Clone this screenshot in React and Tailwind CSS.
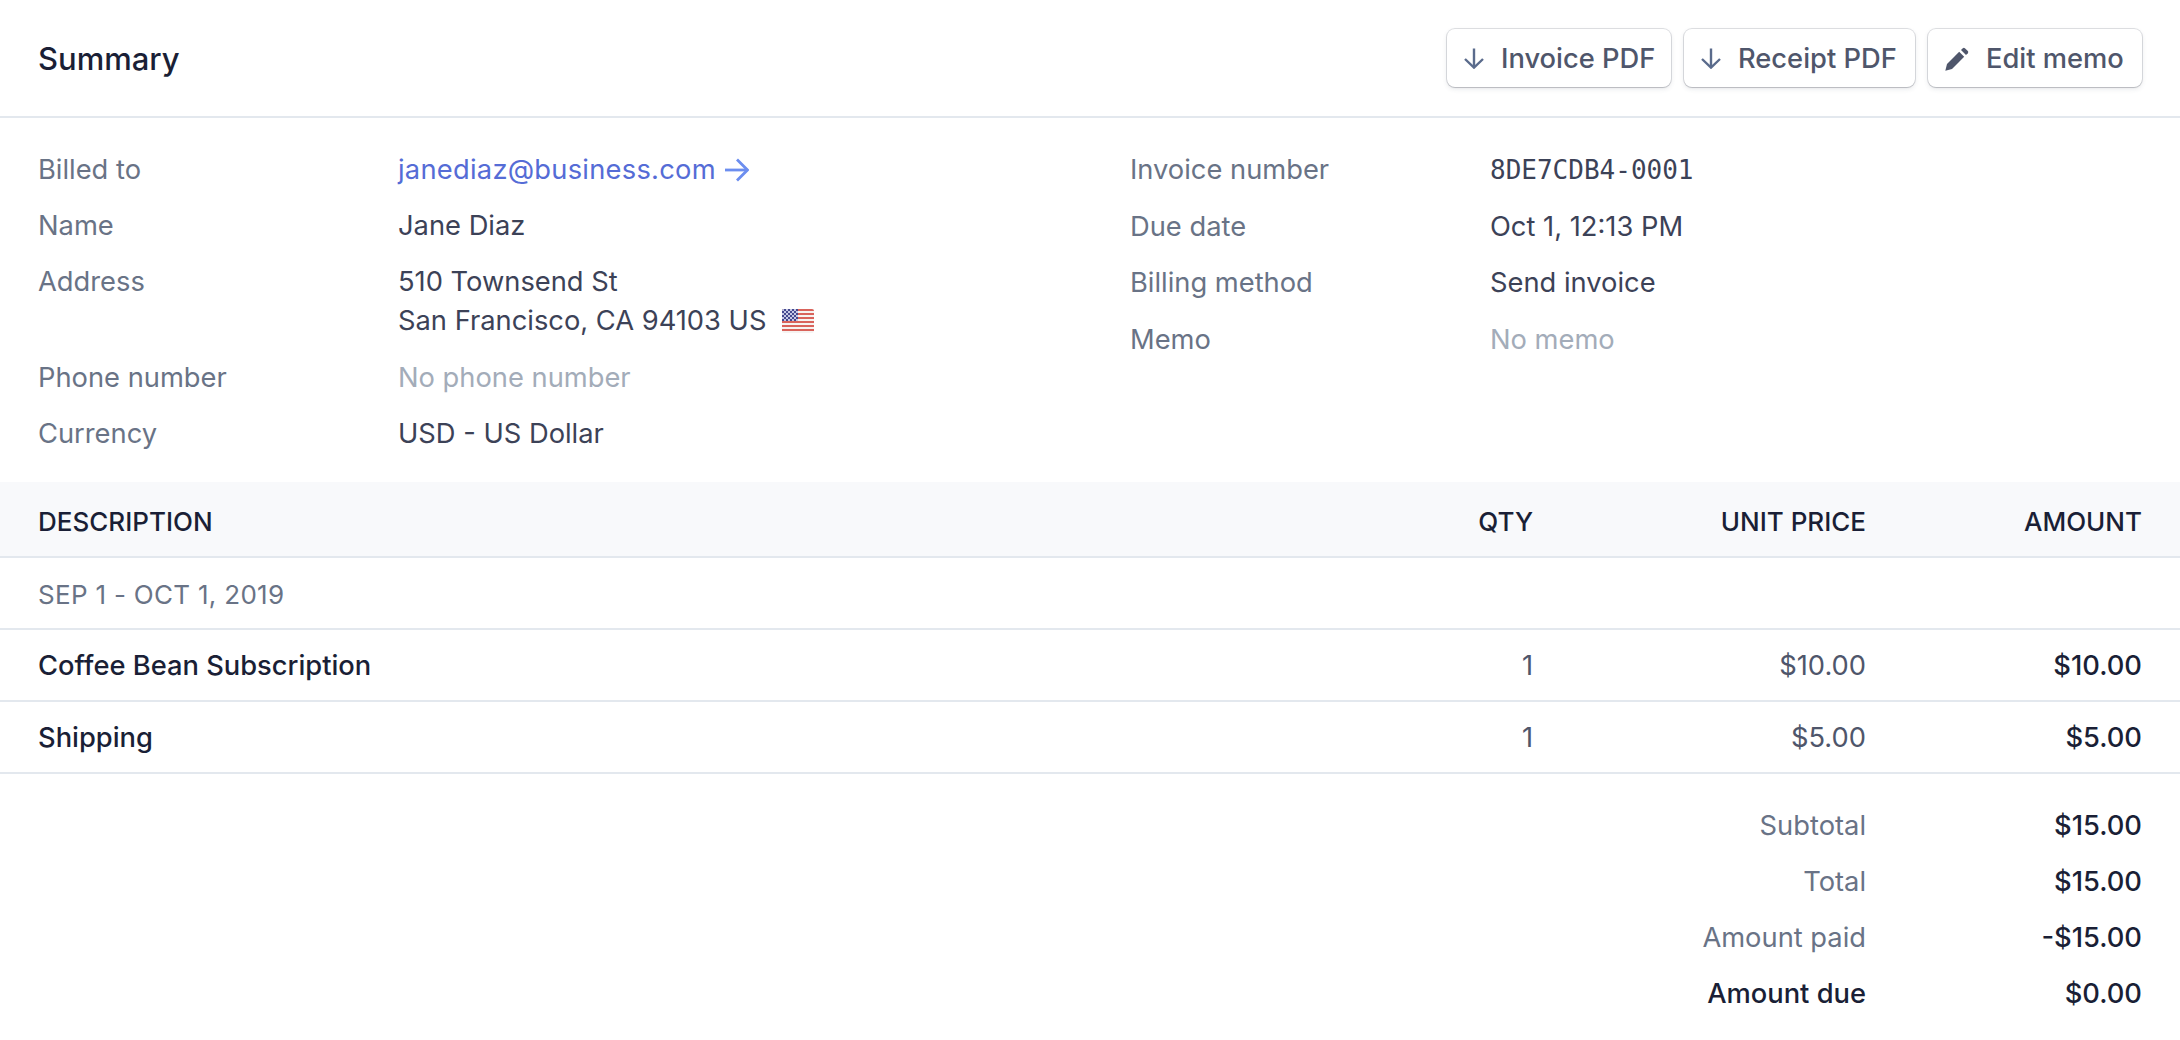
const leftFields = [
  { label: 'Billed to', value: 'link' },
  { label: 'Name', value: 'Jane Diaz' },
  { label: 'Address', value: 'address' },
  { label: 'Phone number', value: 'No phone number', muted: true },
  { label: 'Currency', value: 'USD - US Dollar' },
]

const rightFields = [
  { label: 'Invoice number', value: '8DE7CDB4-0001', mono: true },
  { label: 'Due date', value: 'Oct 1, 12:13 PM' },
  { label: 'Billing method', value: 'Send invoice' },
  { label: 'Memo', value: 'No memo', muted: true },
]

const totals = [
  { label: 'Subtotal', amount: '$15.00' },
  { label: 'Total', amount: '$15.00' },
  { label: 'Amount paid', amount: '-$15.00' },
  { label: 'Amount due', amount: '$0.00', strong: true },
]

const flagStripes = [0, 4, 8, 12, 16, 20]
const flagCells = []
for (let row = 0; row < 6; row++) {
  for (let col = 0; col < 8; col++) {
    if ((row + col) % 2 === 0) flagCells.push({ x: col * 2, y: row * 2 })
  }
}

function DownArrow() {
  return (
    <svg viewBox="0 0 20 21" className="w-[20px] h-[21px] shrink-0 text-[#5a6b8c]" fill="none" stroke="currentColor" strokeWidth="2.4">
      <path d="M10 0.5V19" />
      <path d="M1 11l9 8.6 9-8.6" />
    </svg>
  )
}

function RightArrow() {
  return (
    <svg viewBox="0 0 24 24" className="w-[24px] h-[24px] shrink-0 text-[#6c8eef]" fill="none" stroke="currentColor" strokeWidth="2.8">
      <path d="M0 12h22.5" />
      <path d="M12 1.5L22.5 12 12 22.5" />
    </svg>
  )
}

function Pencil() {
  return (
    <svg viewBox="0 0 24 24" className="w-[24px] h-[24px] shrink-0 text-[#4f566b]" fill="currentColor">
      <path d="M0.3 23.7L2 17 14.2 4.8 19.2 9.8 7 22z" />
      <path d="M16 3l1.8-1.8a1.5 1.5 0 0 1 2.1 0l2.9 2.9a1.5 1.5 0 0 1 0 2.1L21 8z" />
    </svg>
  )
}

function Flag() {
  return (
    <svg viewBox="0 0 32 24" className="w-[32px] h-[24px] rounded-[2px] ml-[16px] shrink-0">
      <rect width="32" height="24" fill="#f6f3f1" />
      {flagStripes.map((y) => (
        <rect key={y} y={y} width="32" height="2" fill="#d9635b" />
      ))}
      <rect width="16" height="12" fill="#45498f" />
      {flagCells.map((c) => (
        <rect key={`${c.x}-${c.y}`} x={c.x} y={c.y} width="2" height="2" fill="#c5c8e4" />
      ))}
    </svg>
  )
}

function Button({ icon, width, children }) {
  return (
    <button className={`h-[58px] pl-[17px] pt-[1px] flex items-center gap-[17px] bg-white rounded-[8px] text-[#4f566b] font-[450] whitespace-nowrap shadow-[0_0_0_1px_rgba(60,66,87,0.16),0_2px_5px_rgba(60,66,87,0.12),0_1px_1px_rgba(0,0,0,0.12)] ${width}`}>
      {icon}
      {children}
    </button>
  )
}

function FieldValue({ field }) {
  if (field.value === 'link') {
    return (
      <span className="flex items-center gap-[9px] text-[#556cd6] tracking-[0.25px]">
        janediaz@business.com
        <RightArrow />
      </span>
    )
  }
  if (field.value === 'address') {
    return (
      <div className="mb-[2px]">
        <div>510 Townsend St</div>
        <div className="flex items-center leading-[38px]">San Francisco, CA 94103 US <Flag /></div>
      </div>
    )
  }
  if (field.mono) return <span className="font-['DejaVu_Sans_Mono',monospace] text-[26px]">{field.value}</span>
  return <span className={field.muted ? 'text-[#a3acb9]' : ''}>{field.value}</span>
}

function Fields({ fields, className }) {
  return (
    <div className={`flex flex-col ${className || ''}`}>
      {fields.map((field) => (
        <div key={field.label} className="flex py-2">
          <div className="text-[#697386] w-[360px]">{field.label}</div>
          <div className="text-[#3c4257]"><FieldValue field={field} /></div>
        </div>
      ))}
    </div>
  )
}

function Row({ className, description, qty, unit, amount, amountClass }) {
  return (
    <div className={`flex items-center px-[38px] ${className}`}>
      <div className="flex-1">{description}</div>
      <div className="text-right">{qty}</div>
      <div className="w-[333px] text-right">{unit}</div>
      <div className={`w-[276px] text-right ${amountClass || ''}`}>{amount}</div>
    </div>
  )
}

export default function App() {
  return (
    <div className="w-[2180px] h-[1040px] bg-white overflow-hidden font-['Inter',sans-serif] text-[27.3px] leading-[40px] text-[#1a1f36]">
      <header className="h-[118px] border-b-2 border-[#e3e8ee] flex items-center justify-between px-[38px]">
        <h1 className="text-[31px] font-[450] pt-[1px]">Summary</h1>
        <div className="flex gap-[13px]">
          <Button width="w-[224px]" icon={<DownArrow />}>Invoice PDF</Button>
          <Button width="w-[231px]" icon={<DownArrow />}>Receipt PDF</Button>
          <Button width="w-[214px]" icon={<Pencil />}>Edit memo</Button>
        </div>
      </header>

      <section className="flex px-[38px] pt-[24px] h-[364px]">
        <div className="w-[1092px]"><Fields fields={leftFields} /></div>
        <Fields fields={rightFields} className="gap-[0.5px]" />
      </section>

      <Row
        className="h-[76px] pt-[6px] bg-[#f8f9fb] border-b-2 border-[#e3e8ee] text-[26px] font-[450]"
        description="DESCRIPTION"
        qty="QTY"
        unit="UNIT PRICE"
        amount="AMOUNT"
      />
      <div className="h-[72px] flex items-center px-[38px] pt-[3px] border-b-2 border-[#e3e8ee] text-[26px] tracking-[0.3px] text-[#697386]">
        SEP 1 - OCT 1, 2019
      </div>
      <Row
        className="h-[72px] pt-[2px] border-b-2 border-[#e3e8ee]"
        description={<span className="font-[450]">Coffee Bean Subscription</span>}
        qty={<span className="text-[#4f566b]">1</span>}
        unit={<span className="text-[#4f566b]">$10.00</span>}
        amount="$10.00"
        amountClass="font-[450]"
      />
      <Row
        className="h-[72px] pt-[2px] border-b-2 border-[#e3e8ee]"
        description={<span className="font-[450]">Shipping</span>}
        qty={<span className="text-[#4f566b]">1</span>}
        unit={<span className="text-[#4f566b]">$5.00</span>}
        amount="$5.00"
        amountClass="font-[450]"
      />

      <section className="pt-[24px] px-[38px] flex flex-col">
        {totals.map((t) => (
          <div key={t.label} className="h-[56px] flex items-center justify-end">
            <div className={t.strong ? 'font-[450]' : 'text-[#697386]'}>{t.label}</div>
            <div className="w-[276px] text-right font-[450]">{t.amount}</div>
          </div>
        ))}
      </section>
    </div>
  )
}
